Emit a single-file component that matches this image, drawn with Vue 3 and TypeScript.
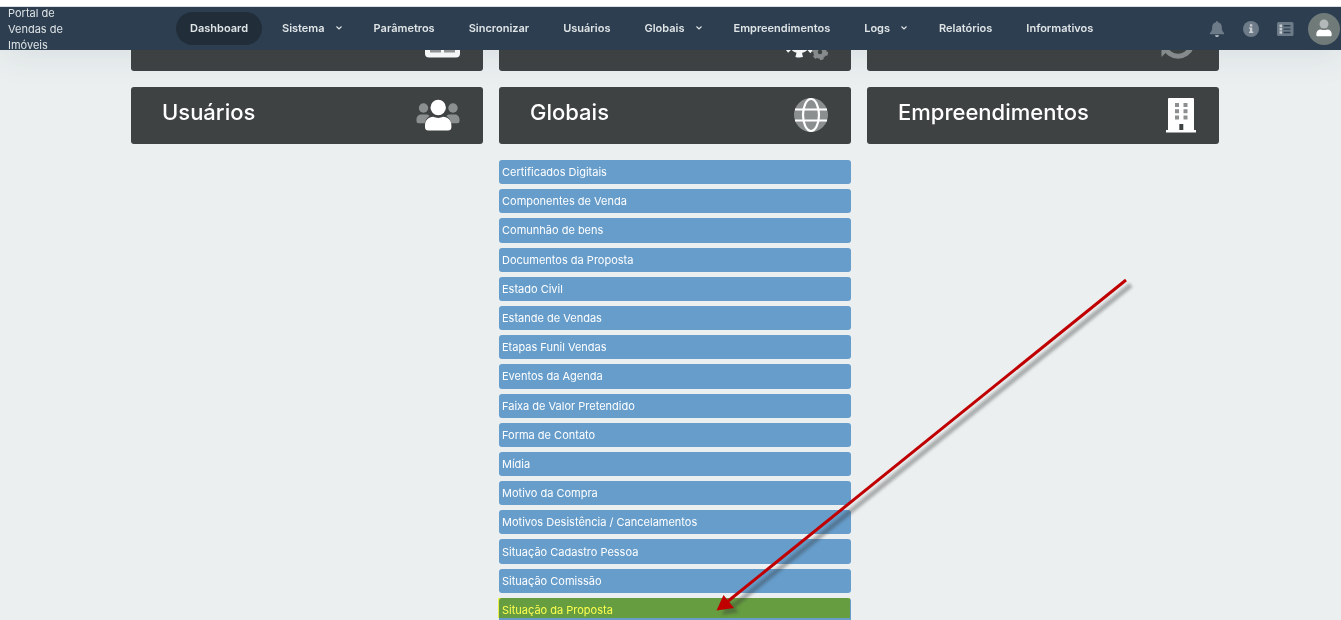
<script setup lang="ts">
interface NavItem {
  label: string
  menu?: boolean
  active?: boolean
}

const navItems: NavItem[] = [
  { label: 'Dashboard', active: true },
  { label: 'Sistema', menu: true },
  { label: 'Parâmetros' },
  { label: 'Sincronizar' },
  { label: 'Usuários' },
  { label: 'Globais', menu: true },
  { label: 'Empreendimentos' },
  { label: 'Logs', menu: true },
  { label: 'Relatórios' },
  { label: 'Informativos' },
]

const globais: string[] = [
  'Certificados Digitais',
  'Componentes de Venda',
  'Comunhão de bens',
  'Documentos da Proposta',
  'Estado Civil',
  'Estande de Vendas',
  'Etapas Funil Vendas',
  'Eventos da Agenda',
  'Faixa de Valor Pretendido',
  'Forma de Contato',
  'Mídia',
  'Motivo da Compra',
  'Motivos Desistência / Cancelamentos',
  'Situação Cadastro Pessoa',
  'Situação Comissão',
  'Situação da Proposta',
]
const highlighted = 'Situação da Proposta'
</script>

<template>
  <div class="page">
    <header class="topbar">
      <a class="brand" href="#">Portal de Vendas de Imóveis</a>
      <nav class="nav">
        <template v-for="item in navItems" :key="item.label">
          <button v-if="item.menu" type="button" class="nav-item has-menu">
            {{ item.label }}
            <svg class="chevron" viewBox="0 0 8 8" aria-hidden="true"><path d="M1.500 2.500 4 5l2.500-2.500" /></svg>
          </button>
          <a v-else href="#" class="nav-item" :class="{ active: item.active }">{{ item.label }}</a>
        </template>
      </nav>
      <div class="tools">
        <button type="button" class="tool" aria-label="Notificações">
          <svg viewBox="0 0 18 18" aria-hidden="true">
            <path class="dim" d="M8.200 2.200V1h1.600v1.200c2.500.4 4 2.300 4 4.800 0 3.300.8 4.500 2.200 5.900.4.500.1 1.400-.6 1.400H2.600c-.7 0-1-.9-.6-1.400C3.400 11.500 4.200 10.300 4.200 7c0-2.500 1.500-4.400 4-4.800z" />
            <path class="lit" d="M7 15.200h4a2 1.800 0 0 1-4 0z" />
          </svg>
        </button>
        <button type="button" class="tool" aria-label="Informações">
          <svg viewBox="0 0 18 18" aria-hidden="true">
            <circle class="dim" cx="9" cy="9" r="8" />
            <path class="lit" d="M7.900 4.200h2.400v2.200H7.900zM7 7.400h3.300v4.200h1V13H7v-1.400h1V8.800H7z" />
          </svg>
        </button>
        <button type="button" class="tool" aria-label="Lista">
          <svg viewBox="0 0 18 18" aria-hidden="true">
            <rect class="dim" x="1" y="2" width="16.500" height="14" rx="1.500" />
            <path class="lit" d="M3.500 4.400h2.600V7H3.500zM3.500 7.800h2.600v2.600H3.500zM3.500 11.200h2.600v2.600H3.500z" />
            <path class="cut" d="M7.600 5h6.800v1.400H7.600zM7.600 8.400h6.800v1.400H7.600zM7.600 11.800h6.800v1.400H7.600z" />
          </svg>
        </button>
        <button type="button" class="avatar" aria-label="Perfil">
          <svg viewBox="0 0 32 32" aria-hidden="true">
            <circle cx="16" cy="11" r="4.500" fill="#b3b8b8" />
            <path d="M8.300 21.200c0-2.700 1.900-4.700 4.500-4.700 1.200.5 2 .6 3.200.6s2-.1 3.200-.6c2.600 0 4.500 2 4.500 4.700v.8c0 .8-.6 1.300-1.300 1.300H9.600c-.7 0-1.300-.5-1.300-1.300z" fill="#fff" />
          </svg>
        </button>
      </div>
    </header>

    <main class="content">
      <div class="grid">
        <button type="button" class="card" aria-label="Sistema">
          <svg class="icon" width="35" height="44" viewBox="0 0 35 44" aria-hidden="true">
            <rect y="7" width="35" height="34.500" rx="4" fill="#fff" />
            <path d="M5 32h11v4.500H5zM19 32h11v4.500H19z" fill="#97999a" />
          </svg>
        </button>
        <button type="button" class="card" aria-label="Parâmetros">
          <svg class="icon" width="42" height="44" viewBox="0 0 42 44" aria-hidden="true">
            <circle cx="13.500" cy="25.500" r="11.500" fill="#fff" />
            <circle cx="13.500" cy="25.500" r="13.500" fill="none" stroke="#fff" stroke-width="5" stroke-dasharray="7.069 7.069" stroke-dashoffset="3.534" transform="rotate(90 13.500 25.500)" />
            <circle cx="34" cy="36" r="4.500" fill="none" stroke="#8c8f90" stroke-width="4.500" />
            <circle cx="34" cy="36" r="6.800" fill="none" stroke="#8c8f90" stroke-width="2.600" stroke-dasharray="3.560 3.560" />
          </svg>
        </button>
        <button type="button" class="card" aria-label="Sincronizar">
          <svg class="icon" width="36" height="44" viewBox="0 0 36 44" aria-hidden="true">
            <path d="M4.500 30.500A14.200 14.200 0 0 0 31.500 30.500" fill="none" stroke="#8c8f90" stroke-width="5" />
            <path d="M1.500 41V28h13z" fill="#8c8f90" />
          </svg>
        </button>

        <button type="button" class="card">
          <span class="title">Usuários</span>
          <svg class="icon" width="44" height="36" viewBox="0 0 44 36" aria-hidden="true">
            <g fill="#8c8f90">
              <circle cx="7.500" cy="11" r="4.700" />
              <circle cx="37" cy="11" r="4.700" />
              <path d="M.5 22.500c0-3 2-5 5-5H10c1.500 0 2.500.5 3.500 1.400-2.500 1.600-4 4.200-4.600 7.300H2.500c-1.200 0-2-.8-2-2zM43.500 22.500c0-3-2-5-5-5H34c-1.500 0-2.500.5-3.500 1.400 2.500 1.600 4 4.200 4.600 7.300h6.400c1.200 0 2-.8 2-2z" />
            </g>
            <circle cx="22.200" cy="10.500" r="8.800" fill="#3f4243" />
            <circle cx="22.200" cy="10.500" r="7.700" fill="#fff" />
            <path d="M9 28.500c0-5 3.400-8.700 8.400-8.700 1.700.8 3.200 1.100 4.800 1.100s3.100-.3 4.800-1.100c5 0 8.400 3.700 8.400 8.700v1.700c0 2-1.300 3.300-3.300 3.300H12.300c-2 0-3.300-1.300-3.300-3.300z" fill="#fff" />
          </svg>
        </button>

        <button type="button" class="card" aria-expanded="true">
          <span class="title">Globais</span>
          <svg class="icon" width="34" height="36" viewBox="0 0 34 36" aria-hidden="true">
            <circle cx="17" cy="18" r="17" fill="#8c8f90" />
            <path d="M1 12.500h32M1 23.500h32" stroke="#fff" stroke-width="2.200" />
            <ellipse cx="17" cy="18" rx="8" ry="16" fill="none" stroke="#fff" stroke-width="2.200" />
          </svg>
        </button>

        <button type="button" class="card">
          <span class="title">Empreendimentos</span>
          <svg class="icon" width="30" height="36" viewBox="0 0 30 36" aria-hidden="true">
            <path d="M2 2q0-1 1-1h24q1 0 1 1v31h2v2.500H0V33h2z" fill="#fff" />
            <path d="M9 6h4v4H9zM17.500 6h4v4h-4zM9 12.200h4v4H9zM17.500 12.200h4v4h-4zM9 18.400h4v4H9zM17.500 18.400h4v4h-4z" fill="#8c8f90" />
            <path d="M13.300 27h4v6h-4z" fill="#3f4243" />
          </svg>
        </button>

        <ul class="links">
          <li v-for="name in globais" :key="name">
            <a href="#" class="link" :class="{ marked: name === highlighted }">{{ name }}</a>
          </li>
        </ul>
      </div>
    </main>

    <svg class="arrow" width="430" height="350" viewBox="710 270 430 350" aria-hidden="true">
      <defs>
        <filter id="soft" x="-5%" y="-5%" width="110%" height="110%"><feGaussianBlur stdDeviation="1.800" /></filter>
      </defs>
      <g transform="translate(5 5)" opacity=".36" filter="url(#soft)">
        <path d="M1126 280 727 602" stroke="#333" stroke-width="5" />
        <path d="M717 610l6.500-15 10.500 12.500z" fill="#333" />
      </g>
      <path d="M1126 280 727 602" stroke="#c00000" stroke-width="3" />
      <path d="M716.500 610.500l7-15.500 10.500 13z" fill="#c00000" />
    </svg>
  </div>
</template>

<style>
body {
  margin: 0;
  background: #ebeff0;
}
</style>

<style scoped>
.page {
  position: relative;
  display: flex;
  flex-direction: column;
  height: 100vh;
  overflow: hidden;
  box-sizing: border-box;
  border-top: 6px solid #fff;
  background: #ebeff0;
  font-family: Inter, Roboto, "Liberation Sans", sans-serif;
  font-size: 11px;
}
button {
  border: 0;
  margin: 0;
  padding: 0;
  background: none;
  font: inherit;
  color: inherit;
  cursor: pointer;
}
a {
  color: inherit;
  text-decoration: none;
}
.topbar {
  position: relative;
  z-index: 1;
  flex: none;
  display: flex;
  align-items: center;
  height: 43px;
  border-top: 1px solid #dcdfe2;
  background: #2c3e50;
  color: #dfe4e6;
  box-shadow: 0 8px 32px rgba(44, 62, 80, 0.08);
}
.brand {
  width: 72px;
  margin-left: 8px;
  margin-right: 96px;
  line-height: 16px;
}
.nav {
  display: flex;
  gap: 6px;
  flex: 1;
}
.nav-item {
  display: flex;
  align-items: center;
  box-sizing: border-box;
  height: 33px;
  padding: 0 14px 2px;
  border-radius: 17px;
  font-weight: 600;
  white-space: nowrap;
}
.nav-item.active {
  background: #212e3a;
}
.nav-item.has-menu {
  padding-right: 11px;
}
.chevron {
  width: 8px;
  height: 8px;
  margin-left: 10px;
  fill: none;
  stroke: #dfe4e6;
  stroke-width: 1.2;
}
.tools {
  display: flex;
  align-items: center;
  gap: 16px;
  margin-right: 1px;
}
.tool,
.tool svg {
  display: block;
  width: 18px;
  height: 18px;
}
.tool {
  padding-bottom: 2px;
}
.dim {
  fill: #6d7a87;
}
.lit {
  fill: #c8cdd1;
}
.cut {
  fill: #2c3e50;
}
.avatar {
  width: 32px;
  height: 32px;
  margin-left: -2px;
  border-radius: 50%;
  background: #707a79;
}
.avatar svg {
  display: block;
}
.content {
  flex: 1;
  min-height: 0;
  padding: 0 122px 0 131px;
}
.grid {
  display: grid;
  grid-template-columns: repeat(3, 1fr);
  gap: 16px;
  margin-top: -36px;
}
.card {
  display: flex;
  justify-content: space-between;
  height: 57px;
  padding: 10px 23px 0 31px;
  border-radius: 3px;
  background: #3f4243;
  color: #fff;
}
.title {
  font-size: 22px;
  font-weight: 500;
  line-height: 31px;
}
.icon {
  flex: none;
  margin-left: auto;
}
.card:nth-child(-n + 3) {
  padding-top: 2px;
}
.links {
  grid-column: 2;
  display: grid;
  grid-auto-rows: 1fr;
  gap: 5px;
  min-height: 462px;
  margin: 0;
  padding: 0;
  list-style: none;
}
.links li {
  display: grid;
}
.link {
  position: relative;
  display: flex;
  align-items: center;
  padding: 0 3px;
  border-radius: 3px;
  background: #669dcb;
  color: #fff;
}
.marked::after {
  content: "";
  position: absolute;
  top: 0;
  left: -1px;
  right: 1px;
  height: 20px;
  background: #ffff50;
  mix-blend-mode: multiply;
}
.arrow {
  position: absolute;
  z-index: 2;
  left: 710px;
  top: 264px;
  pointer-events: none;
}
</style>
